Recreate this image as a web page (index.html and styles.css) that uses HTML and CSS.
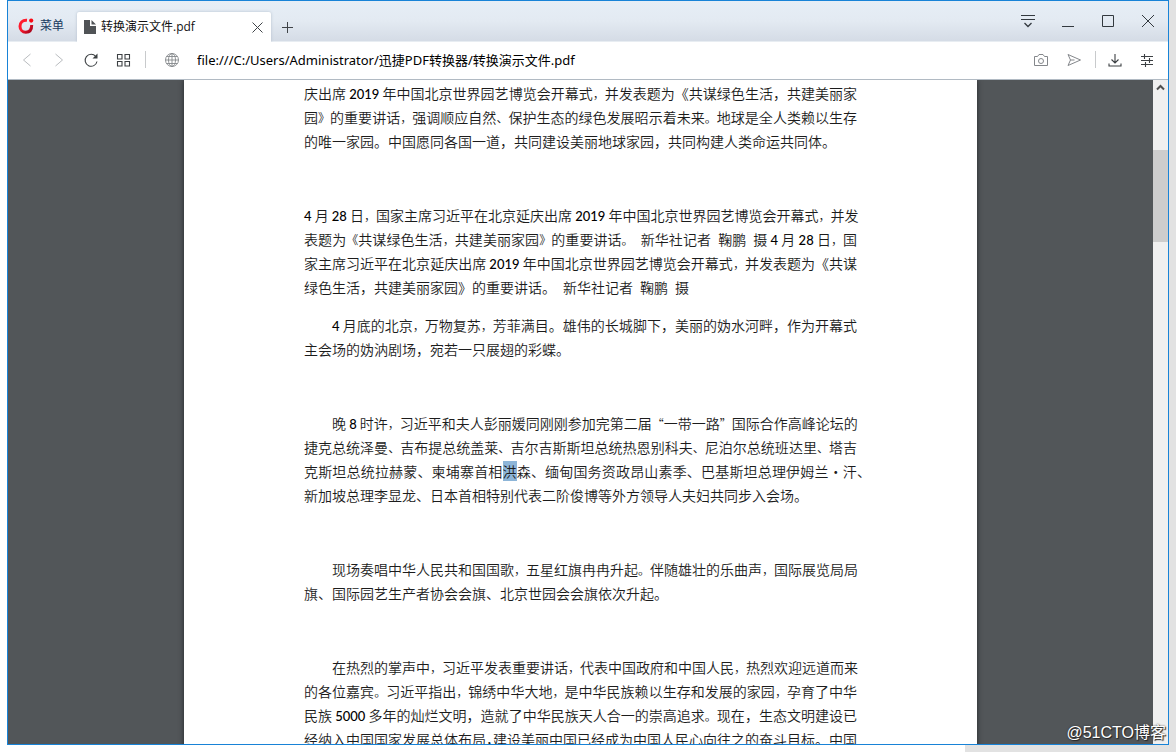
FILE: index.html
```html
<!DOCTYPE html>
<html lang="zh-CN">
<head>
<meta charset="utf-8">
<title>转换演示文件.pdf</title>
<link rel="stylesheet" href="styles.css">
</head>
<body>
<div class="window">
  <header class="titlebar">
    <button class="menu">
      <svg class="logo" width="16" height="16" viewBox="0 0 16 16" aria-hidden="true">
        <defs><linearGradient id="red" gradientUnits="userSpaceOnUse" x1="4" y1="4" x2="15" y2="14"><stop offset="0.3" stop-color="#ff1b2d"/><stop offset="1" stop-color="#980018"/></linearGradient></defs>
        <path d="M9 2.200C4.500 1.800 2 4.800 2 8.200c0 3.400 2.500 6 5.800 6 3.700 0 5.900-2.700 5.900-7.200" stroke="url(#red)"/>
        <circle cx="13.200" cy="2.600" r="2.100" fill="#fa0a14"/>
      </svg>
      菜单
    </button>
    <div class="tab">
      <svg width="12" height="14" viewBox="0 0 12 14" aria-hidden="true"><path d="M0 0h6v6h6v8H0zM7.500 0L12 4.500H7.500z" fill="#505356"/></svg>
      <span class="tab-title">转换演示文件.pdf</span>
      <button class="icon close" aria-label="关闭标签页"><svg width="11" height="11" viewBox="0 0 11 11"><path d="M.5.5l10 10M10.500.5l-10 10"/></svg></button>
    </div>
    <button class="icon new-tab" aria-label="新标签页"><svg width="11" height="11" viewBox="0 0 11 11"><path d="M5.500 0v11M0 5.500h11"/></svg></button>
    <div class="controls">
      <button class="icon" aria-label="标签菜单"><svg width="14" height="14" viewBox="0 0 14 14"><path d="M0 1.500h14M0 5.500h14"/><path d="M3.500 9L7 12.500 10.500 9" stroke-width="1.300"/></svg></button>
      <button class="icon" aria-label="最小化"><svg width="14" height="14" viewBox="0 0 14 14"><path d="M1 12.500h12"/></svg></button>
      <button class="icon" aria-label="最大化"><svg width="14" height="14" viewBox="0 0 14 14"><path d="M1.500 1.500h11v11h-11z"/></svg></button>
      <button class="icon" aria-label="关闭"><svg width="14" height="14" viewBox="0 0 14 14"><path d="M1 1l12 12M13 1L1 13"/></svg></button>
    </div>
  </header>
  <nav class="toolbar">
    <button class="icon pale" aria-label="后退"><svg width="16" height="16" viewBox="0 0 16 16"><path d="M11.500 2l-7 6 7 6"/></svg></button>
    <button class="icon pale" aria-label="前进"><svg width="16" height="16" viewBox="0 0 16 16"><path d="M4.500 2l7 6-7 6"/></svg></button>
    <button class="icon strong" aria-label="重新加载"><svg width="16" height="16" viewBox="0 0 16 16"><path d="M12.800 4.500A6 6 0 1 0 14 9.500"/><path class="solid" d="M14.500 1.500v5h-5z"/></svg></button>
    <button class="icon strong" aria-label="快速拨号"><svg width="16" height="16" viewBox="0 0 16 16"><path d="M2.500 2.500h4.500v4.500h-4.500zM10 2.500h4.500v4.500h-4.500zM2.500 9.500h4.500v4.500h-4.500zM10 9.500h4.500v4.500h-4.500z"/></svg></button>
    <span class="divider"></span>
    <svg class="globe" width="16" height="16" viewBox="0 0 16 16" aria-hidden="true"><circle cx="8" cy="8" r="6.500"/><ellipse cx="8" cy="8" rx="3.500" ry="6.500"/><path d="M8 1.500v13M1.500 8h13M2.500 4.500h11M2.500 11.500h11"/></svg>
    <input class="address" type="text" aria-label="地址" value="file:///C:/Users/Administrator/迅捷PDF转换器/转换演示文件.pdf">
    <div class="actions">
      <button class="icon grey" aria-label="快照"><svg width="16" height="16" viewBox="0 0 16 16"><path d="M1.500 4.500h3l1.500-2h4l1.500 2h3v9h-13z"/><circle cx="8" cy="9" r="2.500"/></svg></button>
      <button class="icon grey" aria-label="发送"><svg width="16" height="16" viewBox="0 0 16 16"><path d="M2 2.500L14.500 8 2 13.500 4.500 8zM4.500 8h4"/></svg></button>
      <span class="divider"></span>
      <button class="icon strong" aria-label="下载"><svg width="16" height="16" viewBox="0 0 16 16"><path d="M8 2v8.500M4.500 7.500L8 11l3.500-3.500M2 11.500v2.500h12v-2.500"/></svg></button>
      <button class="icon strong" aria-label="简易设置"><svg width="14" height="16" viewBox="0 0 14 16"><path d="M1 4.500h12M1 8.500h12M1 12.500h12M4.500 2v5M9.500 6v5M5.500 10v5"/></svg></button>
    </div>
  </nav>
  <main class="viewer">
    <div class="canvas">
      <article class="page">
        <p><span class="line full">庆出席 <b>2019</b> 年中国北京世界园艺博览会开幕式<i>，</i>并发表题为《共谋绿色生活，共建美丽家</span>
        <span class="line full">园<i>》</i>的重要讲话<i>，</i>强调顺应自然<i>、</i>保护生态的绿色发展昭示着未来<i>。</i>地球是全人类赖以生存</span>
        <span class="line">的唯一家园。中国愿同各国一道，共同建设美丽地球家园，共同构建人类命运共同体。</span></p>
        <p><span class="line full"><b>4</b> 月 <b>28</b> 日<i>，</i>国家主席习近平在北京延庆出席 <b>2019</b> 年中国北京世界园艺博览会开幕式<i>，</i>并发</span>
        <span class="line full">表题为<i>《</i>共谋绿色生活<i>，</i>共建美丽家园<i>》</i>的重要讲话<i>。</i>&ensp;新华社记者&ensp;鞠鹏&ensp;摄 <b>4</b> 月 <b>28</b> 日<i>，</i>国</span>
        <span class="line full">家主席习近平在北京延庆出席 <b>2019</b> 年中国北京世界园艺博览会开幕式<i>，</i>并发表题为《共谋</span>
        <span class="line">绿色生活，共建美丽家园》的重要讲话。&ensp;新华社记者&ensp;鞠鹏&ensp;摄</span></p>
        <p class="near"><span class="line full first"><b>4</b> 月底的北京<i>，</i>万物复苏<i>，</i>芳菲满目。雄伟的长城脚下，美丽的妫水河畔，作为开幕式</span>
        <span class="line">主会场的妫汭剧场，宛若一只展翅的彩蝶。</span></p>
        <p><span class="line full first">晚 <b>8</b> 时许<i>，</i>习近平和夫人彭丽媛同刚刚参加完第二届<i>“</i>一带一路<i>”</i>国际合作高峰论坛的</span>
        <span class="line full">捷克总统泽曼<i>、</i>吉布提总统盖莱<i>、</i>吉尔吉斯斯坦总统热恩别科夫<i>、</i>尼泊尔总统班达里<i>、</i>塔吉</span>
        <span class="line full hang">克斯坦总统拉赫蒙、柬埔寨首相<mark>洪</mark>森、缅甸国务资政昂山素季、巴基斯坦总理伊姆兰•汗、</span>
        <span class="line">新加坡总理李显龙、日本首相特别代表二阶俊博等外方领导人夫妇共同步入会场。</span></p>
        <p><span class="line full first">现场奏唱中华人民共和国国歌<i>，</i>五星红旗冉冉升起<i>。</i>伴随雄壮的乐曲声<i>，</i>国际展览局局</span>
        <span class="line">旗、国际园艺生产者协会会旗、北京世园会会旗依次升起。</span></p>
        <p><span class="line full first">在热烈的掌声中<i>，</i>习近平发表重要讲话<i>，</i>代表中国政府和中国人民<i>，</i>热烈欢迎远道而来</span>
        <span class="line full">的各位嘉宾<i>。</i>习近平指出<i>，</i>锦绣中华大地<i>，</i>是中华民族赖以生存和发展的家园<i>，</i>孕育了中华</span>
        <span class="line full">民族 <b>5000</b> 多年的灿烂文明，造就了中华民族天人合一的崇高追求<i>。</i>现在，生态文明建设已</span>
        <span class="line full">经纳入中国国家发展总体布局<i class="half">，</i>建设美丽中国已经成为中国人民心向往之的奋斗目标。中国</span></p>
      </article>
    </div>
    <div class="scrollbar">
      <button class="icon up" aria-label="向上滚动"><svg width="9" height="7" viewBox="0 0 9 7"><path d="M1 5.500L4.500 2 8 5.500"/></svg></button>
      <div class="thumb"></div>
    </div>
  </main>
</div>
<div class="watermark">@51CTO博客</div>
</body>
</html>
```
FILE: styles.css
```css
* { box-sizing: border-box; }

body {
  margin: 0;
  height: 100vh;
  padding: 0 7px 7px;
  position: relative;
  overflow: hidden;
  font: 12px/16px "Open Sans", "Noto Sans CJK SC", sans-serif;
  background:
    linear-gradient(#e2e2e2, #e2e2e2) right top / 7px 100% no-repeat,
    linear-gradient(#e2e2e2, #e2e2e2) right bottom / 211px 7px no-repeat,
    #fff;
}

button { font: inherit; border: 0; padding: 0; background: none; }

.window {
  height: 100%;
  display: flex;
  flex-direction: column;
  border: 1px solid #1883d7;
  background: #fff;
}

.titlebar {
  flex: none;
  height: 41px;
  display: flex;
  align-items: flex-end;
  background: linear-gradient(#e6eef6 0, #e3eaf2 50%, #d5dce6 98%);
  border-bottom: 1px solid #e8edf2;
}

.menu {
  width: 68px;
  height: 30px;
  padding-left: 10px;
  display: flex;
  align-items: center;
  gap: 6px;
  color: #173a60;
  white-space: nowrap;
}
.logo { fill: none; stroke-width: 3; }

.tab {
  width: 194px;
  height: 30px;
  margin: 0 0 -1px 1px;
  padding: 0 8px 0 7px;
  display: flex;
  align-items: center;
  gap: 5px;
  background: #fff;
  border-radius: 2px 2px 0 0;
  box-shadow: 0 0 3px #b3bfcc;
  clip-path: inset(-4px -4px 0);
}
.tab-title { flex: 1; white-space: nowrap; color: #111; }

.icon { display: flex; align-items: center; justify-content: center; }
.icon svg, .globe { fill: none; stroke: #33393f; }
.close svg, .new-tab svg { stroke: #404448; }
.new-tab { width: 33px; height: 28px; }

.controls {
  height: 40px;
  margin-left: auto;
  padding-right: 13px;
  display: flex;
  align-items: center;
  gap: 26px;
}

.toolbar {
  flex: none;
  height: 38px;
  padding: 0 14px 2px 11px;
  display: flex;
  align-items: center;
  gap: 16px;
  border-bottom: 1px solid #b1bac3;
}
.pale svg { stroke: #b9bcbf; }
.grey svg { stroke: #84878b; }
.strong svg { stroke: #3c4043; stroke-width: 1.1; }
.strong .solid { fill: #3c4043; stroke: none; }
.globe { flex: none; stroke: #85888b; stroke-width: 0.9; margin-left: 4px; }
.divider { flex: none; width: 1px; height: 17px; background: #c8cacc; margin: 0 -2px; }
.address {
  flex: 1;
  min-width: 0;
  border: 0;
  outline: 0;
  padding: 0 0 0 1px;
  background: none;
  color: #000;
  font: 13px/20px "Noto Sans", "Noto Sans CJK SC", sans-serif;
}
.actions { display: flex; align-items: center; gap: 17px; }
.actions .divider { margin: 0 -6px 0 -4px; }

.viewer {
  flex: 1;
  min-height: 0;
  display: flex;
  background: #525659;
}
.canvas {
  flex: 1;
  min-width: 0;
  overflow: hidden;
  display: flex;
  justify-content: center;
  align-items: flex-start;
}

.page {
  width: 793px;
  flex: none;
  padding: 1px 120px 80px;
  background: #fff;
  box-shadow: 0 0 5px #222629;
  color: #1c1c1c;
  font: 14px/24px "Noto Sans CJK SC", sans-serif;
  font-weight: 350;
}
.page p { margin: 0 0 50px; }
.page p:has(+ .near) { margin-bottom: 14px; }
.line { display: block; height: 24px; white-space: nowrap; }
.full { text-align-last: justify; }
.first { padding-left: 28px; }
.hang { margin-right: -14px; }
.page b { font: 500 13px/1 Lato, sans-serif; color: #000; }
.page i { font-style: normal; font-size: 12px; }
.page .half { font-size: 14px; font-feature-settings: "halt"; }
.page mark { background: #8db5d8; color: inherit; }

.scrollbar { flex: none; width: 15px; background: #f0f0f0; }
.up { width: 15px; height: 15px; }
.up svg { stroke: #505050; stroke-width: 2; }
.thumb { height: 92px; margin-top: 55px; background: #cdcdcd; }

.watermark {
  position: absolute;
  right: 10px;
  bottom: 8px;
  color: #fff;
  font: 16px/22px "Liberation Sans", "Noto Sans CJK SC", sans-serif;
  text-shadow: 1px 1px 1px #222, 0 0 2px #333;
}
```
